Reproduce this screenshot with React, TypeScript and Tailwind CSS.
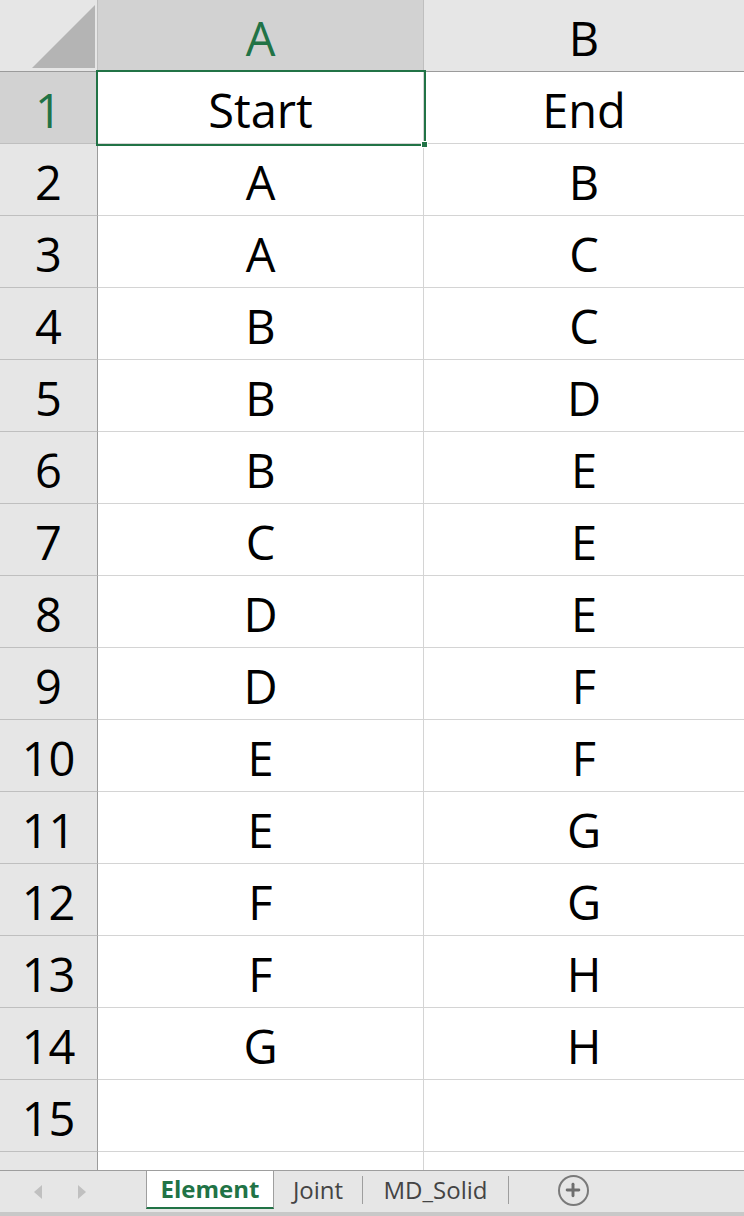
import { Plus } from 'lucide-react'

// ── Data ──────────────────────────────────────────────────────────────────────

const ROWS: [string, string][] = [
  ['Start', 'End'],
  ['A', 'B'],
  ['A', 'C'],
  ['B', 'C'],
  ['B', 'D'],
  ['B', 'E'],
  ['C', 'E'],
  ['D', 'E'],
  ['D', 'F'],
  ['E', 'F'],
  ['E', 'G'],
  ['F', 'G'],
  ['F', 'H'],
  ['G', 'H'],
  ['', ''],
]

const FONT = { fontFamily: '"Open Sans", "Noto Sans", sans-serif' }

// ── Grid pieces ───────────────────────────────────────────────────────────────

function HeaderRow() {
  return (
    <div className="flex h-[72px] border-b border-[#9b9b9b]">
      <div className="w-[98px] shrink-0 bg-[#e6e6e6] border-r border-[#bfbfbf] flex items-end">
        <svg width="97" height="71" viewBox="0 0 97 71">
          <polygon points="32,68 95,68 95,5" fill="#b4b4b4" />
        </svg>
      </div>
      <div className="w-[326px] shrink-0 bg-[#d2d2d2] border-r border-[#bfbfbf] flex items-center justify-center pt-[5px] text-[47px] text-[#217346]">
        A
      </div>
      <div className="flex-1 bg-[#e6e6e6] flex items-center justify-center pt-[5px] text-[47px] text-black">
        B
      </div>
    </div>
  )
}

function DataRow({ label, active, a, b }: { label: string; active?: boolean; a: string; b: string }) {
  return (
    <div className="flex h-[72px]">
      <div
        className={`w-[98px] shrink-0 border-r border-r-[#9b9b9b] border-b border-b-[#bfbfbf] flex items-center justify-center pt-[5px] text-[47px] ${
          active ? 'bg-[#d2d2d2] text-[#217346]' : 'bg-[#e6e6e6] text-black'
        }`}
      >
        {label}
      </div>
      <div className="w-[326px] shrink-0 bg-white border-r border-b border-[#d4d4d4] flex items-center justify-center pt-[5px] text-[47px] text-black">
        {a}
      </div>
      <div className="flex-1 bg-white border-b border-[#d4d4d4] flex items-center justify-center pt-[5px] text-[47px] text-black">
        {b}
      </div>
    </div>
  )
}

// ── Sheet tabs ────────────────────────────────────────────────────────────────

function TabBar() {
  return (
    <div className="h-[46px] bg-[#e6e6e6] border-t border-[#9e9e9e] flex flex-col">
      <div className="flex-1 flex items-stretch">
        <div className="w-[146px] shrink-0 flex items-center gap-[34px] pl-[34px]">
          <svg width="9" height="14" viewBox="0 0 9 14">
            <polygon points="8,0 8,14 0,7" fill="#c0c0c0" />
          </svg>
          <svg width="9" height="14" viewBox="0 0 9 14">
            <polygon points="1,0 1,14 9,7" fill="#c0c0c0" />
          </svg>
        </div>
        <div className="w-[128px] shrink-0 bg-white border-x border-[#9e9e9e] border-b-2 border-b-[#217346] flex items-center justify-center text-[24px] font-bold text-[#217346] mb-[3px]">
          Element
        </div>
        <div className="w-[88px] shrink-0 flex items-center justify-center pb-[3px] text-[24px] text-[#444]">
          Joint
        </div>
        <div className="w-px my-[5px] mb-[8px] bg-[#9e9e9e]" />
        <div className="w-[145px] shrink-0 flex items-center justify-center pb-[3px] text-[24px] text-[#444]">
          MD_Solid
        </div>
        <div className="w-px my-[5px] mb-[8px] bg-[#9e9e9e]" />
        <div className="w-[128px] shrink-0 flex items-center justify-center pb-[3px]">
          <div className="w-[31px] h-[31px] rounded-full border-2 border-[#7a7a7a] flex items-center justify-center">
            <Plus size={20} strokeWidth={3.5} color="#6e6e6e" />
          </div>
        </div>
      </div>
      <div className="h-[4px] bg-[#c8c8c8]" />
    </div>
  )
}

// ── Main component ────────────────────────────────────────────────────────────

export default function App() {
  return (
    <div className="w-[744px] h-[1216px] overflow-hidden bg-white flex flex-col" style={FONT}>
      <div className="relative h-[1170px] overflow-hidden">
        <HeaderRow />
        {ROWS.map(([a, b], i) => (
          <DataRow key={i} label={String(i + 1)} active={i === 0} a={a} b={b} />
        ))}
        <DataRow label="" a="" b="" />

        {/* Active cell selection */}
        <div className="absolute left-[96px] top-[70px] w-[330px] h-[76px] border-2 border-[#217346]" />
        <div className="absolute left-[421px] top-[141px] w-[7px] h-[7px] bg-[#217346] border border-white" />
      </div>
      <TabBar />
    </div>
  )
}
